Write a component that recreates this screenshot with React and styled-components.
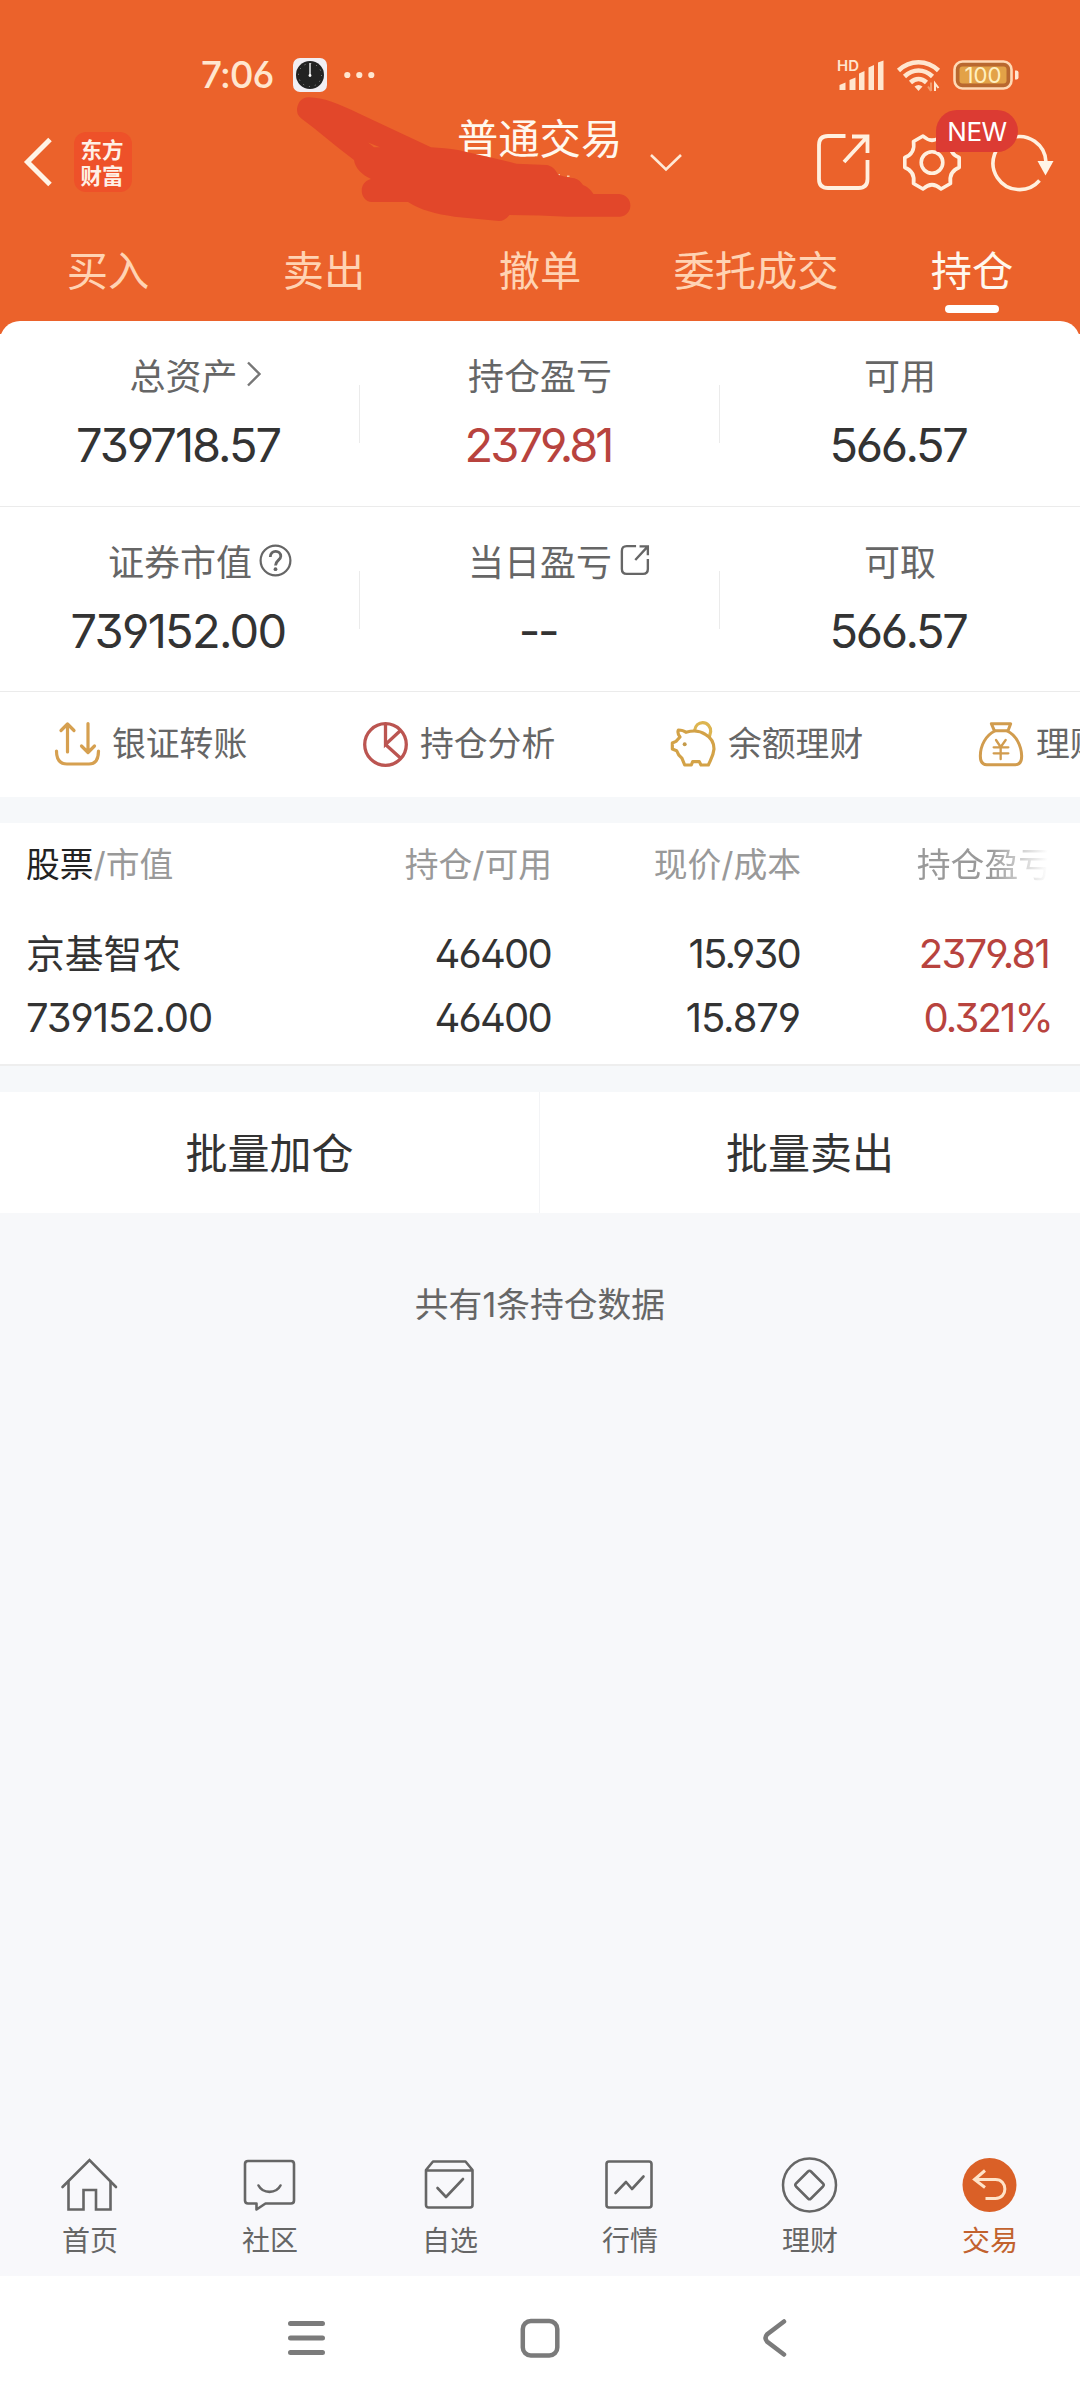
import React from 'react';
import styled, { createGlobalStyle } from 'styled-components';

const GlobalStyle = createGlobalStyle`
  * {
    box-sizing: border-box;
  }

  body {
    margin: 0;
    background-color: #fff;
    font-family: "Inter", "Noto Sans CJK SC", sans-serif;
    font-weight: 400;
    font-feature-settings: "ss01";
    color: #333;
  }

  svg {
    display: block;
    flex-shrink: 0;
    overflow: visible;
  }
`;

const Screen = styled.div`
  position: relative;
  display: flex;
  flex-direction: column;
  width: 1080px;
  height: 2400px;
  overflow: hidden;
  white-space: nowrap;
`;

const Header = styled.header`
  height: 334px;
  flex-shrink: 0;
  background-color: #eb622b;
`;

const StatusBar = styled.div`
  display: flex;
  align-items: center;
  justify-content: space-between;
  height: 100px;
  padding: 50px 61px 0 201px;
`;

const StatusGroup = styled.div`
  display: flex;
  align-items: center;
  gap: ${props => props.$gap}px;
`;

const Clock = styled.span`
  width: 74px;
  font-weight: 500;
  font-size: 37px;
  line-height: 50px;
  letter-spacing: -1.2px;
  color: #ffe6cf;
`;

const TitleBar = styled.div`
  display: grid;
  grid-template-columns: 457px 1fr 263px;
  align-items: center;
  height: 124px;
`;

const Brand = styled.div`
  display: flex;
  align-items: center;
  gap: 22px;
  padding-left: 24px;
`;

const Logo = styled.div`
  display: flex;
  flex-direction: column;
  justify-content: center;
  width: 58px;
  height: 60px;
  padding-right: 2px;
  border-radius: 12px;
  background-color: #ee5129;
  text-align: center;
  font-family: "Noto Sans CJK SC", sans-serif;
  font-weight: 700;
  font-size: 21.5px;
  line-height: 26px;
  color: #fff0e6;
`;

const Account = styled.div`
  display: flex;
  align-items: center;
  gap: 28px;
`;

const AccountName = styled.h1`
  margin: 0 0 47px;
  font-weight: 400;
  font-size: 41.3px;
  line-height: 50px;
  color: #fff8ee;
`;

const Actions = styled.div`
  display: flex;
  align-items: center;
`;

const GearBox = styled.div`
  position: relative;
  margin: 0 31px 0 33px;
`;

const NewBadge = styled.span`
  position: absolute;
  left: 33px;
  top: -24px;
  width: 82px;
  height: 42px;
  border-radius: 21px 21px 21px 2px;
  background-color: #dc3b33;
  text-align: center;
  font-size: 26px;
  font-weight: 400;
  line-height: 43px;
  letter-spacing: -0.5px;
  color: #fff;
  z-index: 1;
`;

const Scribble = styled.svg`
  position: absolute;
  left: 0;
  top: 0;
`;

const Tabs = styled.nav`
  display: grid;
  grid-template-columns: repeat(5, 1fr);
`;

const Tab = styled.div`
  display: flex;
  flex-direction: column;
  align-items: center;
  padding-top: 21px;
  font-size: 41.3px;
  line-height: 52px;
  color: ${props => (props.$active ? '#fff8ee' : '#ffd3b3')};

  &::after {
    content: "";
    width: 54px;
    height: 8px;
    margin-top: 8px;
    border-radius: 4px;
    background-color: ${props => (props.$active ? '#fff' : 'transparent')};
  }
`;

const Sheet = styled.section`
  position: relative;
  height: 476px;
  margin-top: -13px;
  flex-shrink: 0;
  border-radius: 20px 20px 0 0;
  background-color: #fff;
  overflow: hidden;
`;

const StatRow = styled.div`
  display: grid;
  grid-template-columns: repeat(3, 1fr);
  height: ${props => props.$height}px;
  border-bottom: 1px solid #ebebeb;
`;

const Stat = styled.div`
  display: flex;
  flex-direction: column;
  align-items: center;
  padding-top: 31px;
  background: linear-gradient(#ebebeb, #ebebeb) no-repeat right 64px / 1px 58px;

  &:last-child {
    background: none;
  }
`;

const StatLabel = styled.div`
  display: flex;
  align-items: center;
  height: 44px;
  margin-left: ${props => props.$shift || 0}px;
  font-size: 36px;
  color: #666;

  svg {
    margin-left: ${props => props.$gap}px;
    margin-right: ${props => -props.$gap - props.$icon}px;
  }
`;

const StatValue = styled.div`
  margin-top: 23px;
  margin-right: 4px;
  height: 52px;
  font-size: 47px;
  line-height: 52px;
  letter-spacing: ${props => props.$spacing || -2.4}px;
  color: ${props => (props.$up ? '#b8433e' : '#333')};
`;

const QuickActions = styled.div`
  display: flex;
  height: 104px;
  padding: 0 0 0 55px;
`;

const QuickAction = styled.div`
  display: flex;
  align-items: center;
  flex-shrink: 0;
  gap: 12px;
  width: 308px;
  font-size: 33.8px;
  line-height: 50px;
  color: #666;
`;

const Gap = styled.div`
  height: 26px;
  flex-shrink: 0;
  background-color: #f6f8fa;
`;

const Holdings = styled.section`
  position: relative;
  height: 243px;
  flex-shrink: 0;
  padding-top: 16px;
  border-bottom: 2px solid #eee;
`;

const HoldingRow = styled.div`
  display: grid;
  grid-template-columns: 299px 252px 249px 252px;
  height: ${props => props.$height}px;
  font-size: 38.8px;
  line-height: ${props => props.$height}px;
  text-align: right;
  color: #333;

  & > :first-child {
    padding-left: 26px;
    text-align: left;
  }
`;

const ColumnHead = styled(HoldingRow)`
  margin-bottom: 31px;
  font-size: 33.8px;
  color: #999;

  & > :nth-child(n + 2) {
    position: relative;
    left: 1px;
  }

  strong {
    font-weight: 400;
    color: #222;
  }
`;

const FadedHead = styled.span`
  width: 136px;
  margin-left: 115px;
  background: linear-gradient(90deg, #999 55%, #fff 97%);
  background-clip: text;
  -webkit-background-clip: text;
  color: transparent;
`;

const Figure = styled.span`
  padding-right: ${props => props.$inset || 0}px;
  font-size: 40px;
  letter-spacing: ${props => props.$spacing || -1.8}px;
  color: ${props => (props.$up ? '#b8433e' : 'inherit')};
`;

const BatchBar = styled.div`
  display: grid;
  grid-template-columns: 1fr 1fr;
  height: 121px;
  flex-shrink: 0;
`;

const BatchButton = styled.button`
  padding: 0 0 5px;
  border: none;
  border-right: 1px solid #f3f4f6;
  background-color: #fff;
  font-family: inherit;
  font-weight: 400;
  font-size: 42px;
  color: #333;

  &:last-child {
    border-right: none;
  }
`;

const Empty = styled.div`
  flex: 1;
  padding-top: 68px;
  background-color: #f7f8fa;
  text-align: center;
  font-size: 33.8px;
  line-height: 48px;
  color: #666;
`;

const BottomNav = styled.nav`
  display: grid;
  grid-template-columns: repeat(6, 1fr);
  height: 136px;
  flex-shrink: 0;
  background-color: #f8f8fb;
`;

const NavItem = styled.div`
  display: flex;
  flex-direction: column;
  align-items: center;
  padding-top: 16px;
  font-size: 28px;
  line-height: 36px;
  color: ${props => (props.$active ? '#c2622e' : '#666')};

  svg {
    margin-right: 1px;
    margin-bottom: 10px;
  }
`;

const SystemNav = styled.div`
  display: grid;
  grid-template-columns: repeat(3, 234px);
  justify-content: center;
  justify-items: center;
  align-items: center;
  height: 124px;
  flex-shrink: 0;
  background-color: #fff;
`;

const ClockAppIcon = () => (
  <svg width="34" height="34" viewBox="0 0 34 34">
    <rect width="34" height="34" rx="7" fill="#f1eef3" />
    <circle cx="17" cy="17" r="14" fill="#222" />
    <circle cx="17" cy="17" r="11.5" fill="none" stroke="#999" strokeWidth="1" strokeDasharray="1 5.02" />
    <path d="M17 5v12" stroke="#ddd" strokeWidth="1.6" />
    <circle cx="17" cy="17.5" r="1.4" fill="#fff" />
  </svg>
);

const DotsIcon = () => (
  <svg width="31" height="8" viewBox="0 0 31 8" fill="#ffe6cf">
    <circle cx="2.3" cy="4" r="3.1" />
    <circle cx="14.3" cy="4" r="3.1" />
    <circle cx="26.3" cy="4" r="3.1" />
  </svg>
);

const SignalIcon = () => (
  <svg width="48" height="34" viewBox="1 0 48 34" fill="#ffe6cf">
    <text x="0" y="13" fontSize="14.5" fontWeight="600" textLength="22" lengthAdjust="spacingAndGlyphs">HD</text>
    <path d="M2.5 27 8.5 24.5V32h-6zM12.5 22 18.5 19.5V32h-6zM22 15.5 27.5 13V32H22zM31.5 9.5 37 7V32h-5.500zM41 4.500 46.500 2.500V32H41z" />
  </svg>
);

const WifiIcon = () => (
  <svg width="43" height="34" viewBox="1 0 43 34" fill="none" stroke="#ffe6cf" strokeWidth="4.6">
    <path d="M1.5 12.5C13 1.5 30 1.5 41.5 12.5" />
    <path d="M7.5 18.5C16 10.5 27 10.5 35.5 18.5" />
    <path d="M13.5 24.5C18.5 20 24.5 20 29.5 24.5" />
    <path d="M17.5 28.500 21.500 33 25.500 28.500C23 26.500 20 26.500 17.500 28.500z" fill="#ffe6cf" stroke="none" />
    <path d="M34 24.500V33M34 33l-3-4.500" stroke="#f39a6a" strokeWidth="2" />
    <path d="M38 33V25.500l3.500 4.500" strokeWidth="2" />
  </svg>
);

const BatteryIcon = () => (
  <svg width="66" height="30" viewBox="0 0 66 30">
    <rect x="1.500" y="1.500" width="57" height="27" rx="8" fill="#b9682f" stroke="#ffd9b5" strokeWidth="2.600" />
    <rect x="6.500" y="6.500" width="47" height="17" rx="3" fill="#e3a247" />
    <path d="M62 10.500h1.500a2 2 0 0 1 2 2v5a2 2 0 0 1-2 2H62z" fill="#ffe6cf" />
    <text x="30" y="23" fontSize="22" textAnchor="middle" textLength="37" lengthAdjust="spacingAndGlyphs" fill="#fff0c0">100</text>
  </svg>
);

const BackIcon = () => (
  <svg width="28" height="50" viewBox="0 0 28 50" fill="none" stroke="#fff4e6" strokeWidth="5">
    <path d="M26 2.500 3.500 25 26 47.500" />
  </svg>
);

const ChevronDown = () => (
  <svg width="32" height="17" viewBox="0 0 32 17" fill="none" stroke="#ffe9d6" strokeWidth="2.600">
    <path d="M1 1 16 15.500 31 1" />
  </svg>
);

const ExportIcon = ({ size, height, stroke, color }) => (
  <svg width={size} height={height} viewBox="0 0 53 56" fill="none" stroke={color} strokeWidth={stroke}>
    <path d="M28.500 2H11Q2 2 2 11V45Q2 54 11 54H41.500Q50.500 54 50.500 45V26" />
    <path d="M35 2.500H50.500V19M50 3 27 28" />
  </svg>
);

const GearIcon = () => (
  <svg width="58" height="57" viewBox="3 3 58 57" fill="none" stroke="#fff0df" strokeWidth="3.600" strokeLinejoin="round">
    <path d="M23 5Q32 13.500 41 5L50.500 10.500Q48.500 22.500 59.200 26.500V36.500Q48.500 40.500 50.500 52.500L41 58Q32 49.500 23 58L13.500 52.500Q15.500 40.500 4.800 36.500V26.500Q15.500 22.500 13.500 10.500z" />
    <circle cx="32" cy="31.500" r="10.800" />
  </svg>
);

const RefreshIcon = () => (
  <svg width="62" height="57" viewBox="0 0 62 57" fill="none" stroke="#fff0df" strokeWidth="3.600">
    <path d="M47.500 46.500A26.500 26.500 0 1 1 54 28" />
    <path d="M45.500 27H61.500L53.500 41.500z" fill="#fff4e6" stroke="none" />
  </svg>
);

const ArrowRight = () => (
  <svg width="16" height="26" viewBox="0 0 16 26" fill="none" stroke="#777" strokeWidth="2.400">
    <path d="M2 1.500 13.500 13 2 24.500" />
  </svg>
);

const HelpIcon = () => (
  <svg width="33" height="33" viewBox="0 0 33 33" fill="none" stroke="#666" strokeWidth="2.200">
    <circle cx="16.500" cy="16.500" r="14.900" />
    <path d="M11.300 13C11.300 5.500 21.800 5.500 21.800 12.300C21.800 16 16.500 16.500 16.500 21.500" strokeWidth="2.800" />
    <circle cx="16.500" cy="25.200" r="1.900" fill="#666" stroke="none" />
  </svg>
);

const TransferIcon = () => (
  <svg width="45" height="44" viewBox="0 0 45 44" fill="none" stroke="#d6a050" strokeWidth="3.200" strokeLinecap="round" strokeLinejoin="round">
    <path d="M12.500 30V2.500M6 8.500 12.500 2 19 8.500" />
    <path d="M33 1.500V30M26.500 24 33 30.500 39.500 24" />
    <path d="M1.500 29C1.500 38 5 42 12 42H34C40 42 43.500 38 43.500 29" />
  </svg>
);

const PieIcon = () => (
  <svg width="45" height="45" viewBox="0 0 45 45" fill="none" stroke="#bb5551" strokeWidth="3.300">
    <circle cx="22.500" cy="22.500" r="20.800" />
    <path d="M22.500 1.700V22.500L38 8M22.500 22.500 38.500 37" />
  </svg>
);

const PigIcon = () => (
  <svg width="45" height="46" viewBox="63 62 135 138" fill="none" stroke="#d3a247" strokeWidth="9.500" strokeLinejoin="round">
    <path d="M134 90C136 76 146 67 158 67C172 67 183 80 182 94L178 110" stroke="#ddb550" />
    <path d="M90 110C84 102 82 96 85 89C94 89 102 91 108 96C128 90 150 91 166 102C184 112 192 126 192 146C190 168 182 178 175 194H153L148 184H128L124 194H104L96 174C88 168 83 160 80 151L67 146V128L78 123L90 110z" />
    <circle cx="104" cy="132" r="6" fill="#c49a4a" stroke="none" />
  </svg>
);

const BagIcon = () => (
  <svg width="45" height="45" viewBox="57 62 135 135" fill="none" stroke="#d19c4e" strokeWidth="9" strokeLinejoin="round" strokeLinecap="round">
    <path d="M94 67H152L144 88H103z" />
    <path d="M104 89C78 102 61 132 61 164C61 182 68 190 80 190H166C178 190 185 182 185 164C184 132 168 102 142 89" />
    <path d="M108 116 122 137 137 116M122 137V173M101 138H145M101 156H145" strokeWidth="7" />
  </svg>
);

const HomeIcon = () => (
  <svg width="57" height="57" viewBox="0 0 57 57" fill="none" stroke="#666" strokeWidth="2.600" strokeLinecap="round">
    <path d="M1.500 31 28.500 4 55 31" />
    <path d="M7.500 25.500V53.500H22.500V34H35V53.500H49.500V25.500" />
  </svg>
);

const CommunityIcon = () => (
  <svg width="57" height="57" viewBox="0 0 57 57" fill="none" stroke="#666" strokeWidth="2.600" strokeLinejoin="round" strokeLinecap="round">
    <path d="M7 5H50Q53 5 53 8V44.500Q53 47.500 50 47.500H24.500L15.500 53.500V47.500H7Q4 47.500 4 44.500V8Q4 5 7 5z" />
    <path d="M17.500 29.500C22 38 35 38 39.500 29.500" />
  </svg>
);

const WatchlistIcon = () => (
  <svg width="57" height="57" viewBox="0 0 57 57" fill="none" stroke="#666" strokeWidth="2.600" strokeLinejoin="round" strokeLinecap="round">
    <path d="M5 14 12 5.500H44.500L51.500 14V49Q51.500 51.500 49 51.500H7.500Q5 51.500 5 49zM5 14.500H51.500" />
    <path d="M16.500 32 25 41 42 23" />
  </svg>
);

const MarketIcon = () => (
  <svg width="57" height="57" viewBox="0 0 57 57" fill="none" stroke="#666" strokeWidth="2.600" strokeLinejoin="round" strokeLinecap="round">
    <rect x="5.500" y="5.500" width="45" height="46" rx="2.500" />
    <path d="M14.500 37 25 26 31 33 42.500 20.500" />
  </svg>
);

const WealthIcon = () => (
  <svg width="57" height="57" viewBox="0 0 57 57" fill="none" stroke="#666" strokeWidth="2.500" strokeLinejoin="round">
    <circle cx="28.500" cy="29" r="26.500" />
    <path d="M27 15.500Q28.500 14 30 15.500L42 27.500Q43.500 29 42 30.500L30 42.500Q28.500 44 27 42.500L15 30.500Q13.500 29 15 27.500z" />
  </svg>
);

const TradeIcon = () => (
  <svg width="57" height="57" viewBox="0 0 57 57" fill="none" stroke="#ffe3c8" strokeWidth="3">
    <circle cx="28.500" cy="29" r="27" fill="#da6027" stroke="none" />
    <path d="M24 14.500 13.500 23.500 24 31.500M13.500 23.500H34.500C47 23.500 47 42.500 34.500 42.500H24.500" />
  </svg>
);

const STATS = [
  [
    { label: '总资产', value: '739718.57', icon: <ArrowRight />, gap: 8, size: 16, shift: 7, spacing: -2 },
    { label: '持仓盈亏', value: '2379.81', up: true, spacing: -3 },
    { label: '可用', value: '566.57' },
  ],
  [
    { label: '证券市值', value: '739152.00', icon: <HelpIcon />, gap: 7, size: 33, spacing: -1.7 },
    {
      label: '当日盈亏',
      value: '--',
      icon: <ExportIcon size={30} height={30} stroke={4.4} color="#666" />,
      gap: 8,
      size: 30,
    },
    { label: '可取', value: '566.57' },
  ],
];

const QUICK = [
  { label: '银证转账', icon: <TransferIcon /> },
  { label: '持仓分析', icon: <PieIcon /> },
  { label: '余额理财', icon: <PigIcon /> },
  { label: '理财', icon: <BagIcon /> },
];

const NAV = [
  { label: '首页', icon: <HomeIcon /> },
  { label: '社区', icon: <CommunityIcon /> },
  { label: '自选', icon: <WatchlistIcon /> },
  { label: '行情', icon: <MarketIcon /> },
  { label: '理财', icon: <WealthIcon /> },
  { label: '交易', icon: <TradeIcon />, active: true },
];

export default () => {
  return (
    <Screen>
      <GlobalStyle />
      <Header>
        <StatusBar>
          <StatusGroup $gap={18}>
            <Clock>7:06</Clock>
            <ClockAppIcon />
            <DotsIcon />
          </StatusGroup>
          <StatusGroup $gap={12}>
            <SignalIcon />
            <WifiIcon />
            <BatteryIcon />
          </StatusGroup>
        </StatusBar>
        <TitleBar>
          <Brand>
            <BackIcon />
            <Logo>
              <span>东方</span>
              <span>财富</span>
            </Logo>
          </Brand>
          <Account>
            <AccountName>普通交易</AccountName>
            <ChevronDown />
          </Account>
          <Actions>
            <ExportIcon size={53} height={56} stroke={3.8} color="#fff0df" />
            <GearBox>
              <GearIcon />
              <NewBadge>NEW</NewBadge>
            </GearBox>
            <RefreshIcon />
          </Actions>
        </TitleBar>
        <Tabs>
          {['买入', '卖出', '撤单', '委托成交', '持仓'].map(name => (
            <Tab key={name} $active={name === '持仓'}>{name}</Tab>
          ))}
        </Tabs>
      </Header>

      <Sheet>
        {STATS.map((row, i) => (
          <StatRow key={i} $height={i === 0 ? 186 : 185}>
            {row.map(stat => (
              <Stat key={stat.label}>
                <StatLabel $gap={stat.gap || 0} $icon={stat.size || 0} $shift={stat.shift}>
                  {stat.label}
                  {stat.icon}
                </StatLabel>
                <StatValue $up={stat.up} $spacing={stat.spacing}>{stat.value}</StatValue>
              </Stat>
            ))}
          </StatRow>
        ))}
        <QuickActions>
          {QUICK.map((item, i) => (
            <QuickAction key={i}>
              {item.icon}
              {item.label}
            </QuickAction>
          ))}
        </QuickActions>
      </Sheet>

      <Gap />
      <Holdings>
        <ColumnHead $height={52}>
          <span><strong>股票</strong>/市值</span>
          <span>持仓/可用</span>
          <span>现价/成本</span>
          <FadedHead>持仓盈亏</FadedHead>
        </ColumnHead>
        <HoldingRow $height={64}>
          <span>京基智农</span>
          <Figure>46400</Figure>
          <Figure>15.930</Figure>
          <Figure $up $inset={3}>2379.81</Figure>
        </HoldingRow>
        <HoldingRow $height={64}>
          <Figure $spacing={-1.1}>739152.00</Figure>
          <Figure>46400</Figure>
          <Figure $spacing={-1.1}>15.879</Figure>
          <Figure $up>0.321%</Figure>
        </HoldingRow>
      </Holdings>
      <Gap />
      <BatchBar>
        <BatchButton>批量加仓</BatchButton>
        <BatchButton>批量卖出</BatchButton>
      </BatchBar>
      <Empty>共有1条持仓数据</Empty>

      <BottomNav>
        {NAV.map(item => (
          <NavItem key={item.label} $active={item.active}>
            {item.icon}
            {item.label}
          </NavItem>
        ))}
      </BottomNav>
      <SystemNav>
        <svg width="37" height="36" viewBox="0 0 37 36" stroke="#7b7b7b" strokeWidth="5" strokeLinecap="round">
          <path d="M2.500 3.500H34.500M2.500 18H34.500M2.500 32.500H34.500" />
        </svg>
        <svg width="40" height="40" viewBox="0 0 40 40" fill="none" stroke="#7b7b7b" strokeWidth="4.500">
          <rect x="2.800" y="3" width="34.500" height="34.500" rx="8" />
        </svg>
        <svg width="23" height="38" viewBox="0 0 23 38" fill="none" stroke="#7b7b7b" strokeWidth="4.500" strokeLinecap="round">
          <path d="M21 2.500 4 15.500Q1 19 4 22.500L21 35.500" />
        </svg>
      </SystemNav>

      <Scribble width="700" height="230" viewBox="0 0 700 230">
        <path
          fill="#e2472a"
          d="M297 109C298 101 303 97 309 97.300C316 97.500 324 99 331 101.500C341 105 350 109 359 113.500L392 129 431 147.300C440 148 449 148.500 458 150L492 157.700 516.500 163.700 547 165C552 166 555 169 558 174.500C564 177 569 177.500 574.500 178.300C579 180 581 182 583 185C588 187 590 189 593.500 194H619C634 195 634 215.500 620 216.700H567L540 215.500 509.500 215C506 219 503 221 499 221L454.500 216.700C436 214 420 210 408 202H372C359 201 358 182 371 179C362 175 355 168 354 160L337.500 147.300 313.500 127.700 302 119C298 116 297 113 297 109z"
        />
        <path fill="#eb622b" d="M368 142.500 380 147.300H374z" />
        <path fill="#f8c9a8" d="M558 174h2v1.500zM567 175.500h2.500v1.500h-2.500z" />
      </Scribble>
    </Screen>
  )
}
